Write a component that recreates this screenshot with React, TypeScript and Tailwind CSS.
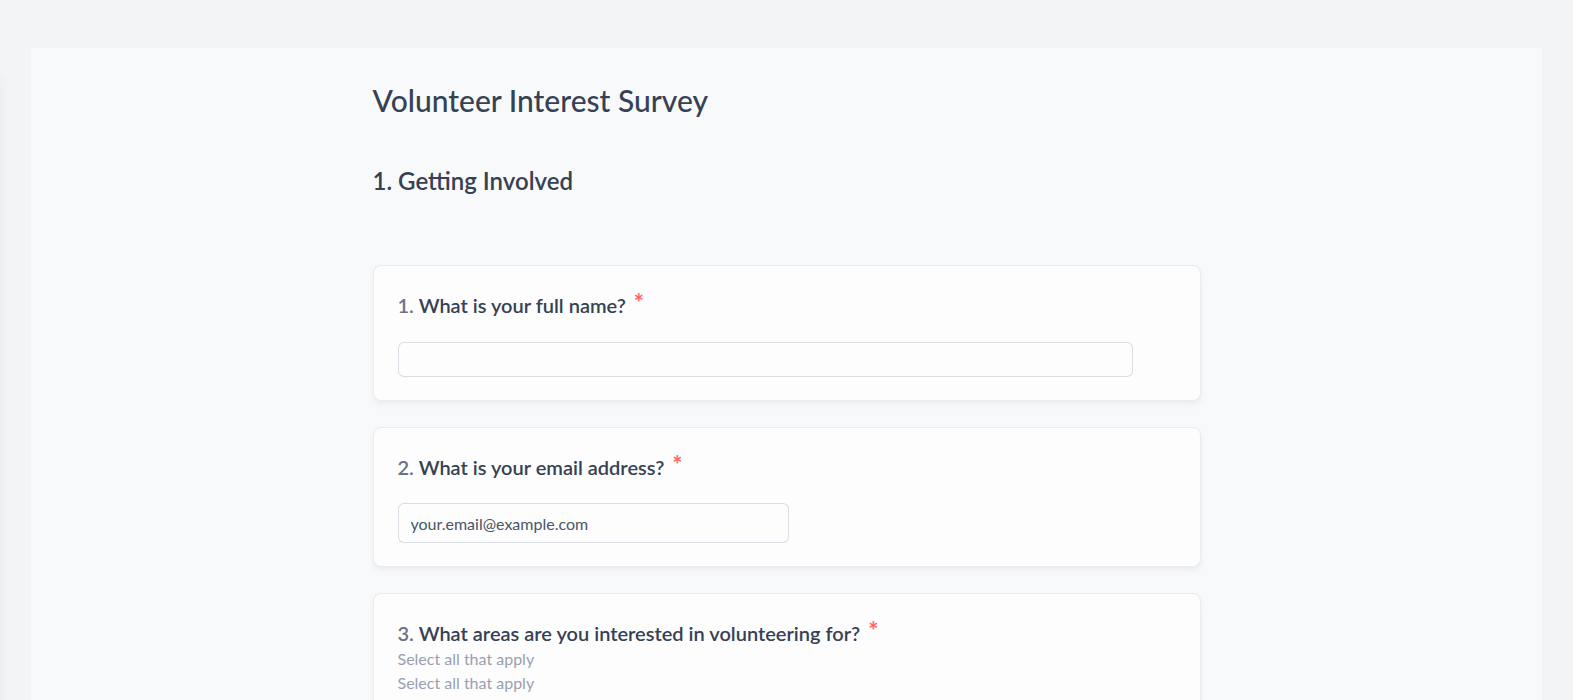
import React from 'react';

const font = { fontFamily: '"Lato", "Noto Sans", sans-serif' };

function Req() {
  return <span className="ml-2 inline-block align-top text-[24px] font-bold leading-none text-red-400">*</span>;
}

function Question({
  n,
  label,
  children,
  help,
}: {
  n: number;
  label: string;
  children?: React.ReactNode;
  help?: string[];
}) {
  return (
    <div className="rounded-lg border border-gray-200/80 bg-[#fdfdfd] px-6 pt-[25px] pb-[23px] shadow-md shadow-gray-200/60">
      <div className="text-[20px] font-semibold leading-7 text-gray-700">
        <span className="text-gray-500">{n}.</span> {label}
        <Req />
      </div>
      {help?.map((h, i) => (
        <div key={i} className="text-base leading-6 text-gray-400">
          {h}
        </div>
      ))}
      {children}
    </div>
  );
}

export default function App() {
  return (
    <div className="min-h-screen bg-white" style={font}>
      {/* shadow of the collapsed drawer off the left edge */}
      <div className="fixed top-[78px] -left-[300px] h-screen w-[300px] shadow-[0_0_14px_rgba(0,0,0,0.05)]" />
      <div className="mr-[15px] min-h-screen bg-gray-100 px-[31px] pt-12">
        <main className="min-h-[800px] bg-[#f8f9fa] pt-[34px] pb-16">
          <div className="mx-auto w-[828px]">
            <h1 className="text-[30px] font-medium leading-9 text-gray-700">Volunteer Interest Survey</h1>
            <h2 className="mt-[47px] text-2xl font-semibold leading-8 text-gray-700">1. Getting Involved</h2>

            <div className="mt-[68px] flex flex-col gap-[26px]">
              <Question n={1} label="What is your full name?">
                <input className="mt-[23px] block h-[35px] w-[735px] rounded-md border border-gray-300/80 bg-[#fdfdfd] px-3 text-base text-gray-600 outline-none" />
              </Question>

              <Question n={2} label="What is your email address?">
                <input
                  className="mt-[22px] block h-10 w-[391px] rounded-md border border-gray-300/80 bg-[#fdfdfd] px-3 text-base text-gray-600 placeholder:text-gray-600 outline-none"
                  placeholder="your.email@example.com"
                />
              </Question>

              <Question
                n={3}
                label="What areas are you interested in volunteering for?"
                help={['Select all that apply', 'Select all that apply']}
              >
                <div className="h-40" />
              </Question>
            </div>
          </div>
        </main>
      </div>
    </div>
  );
}
